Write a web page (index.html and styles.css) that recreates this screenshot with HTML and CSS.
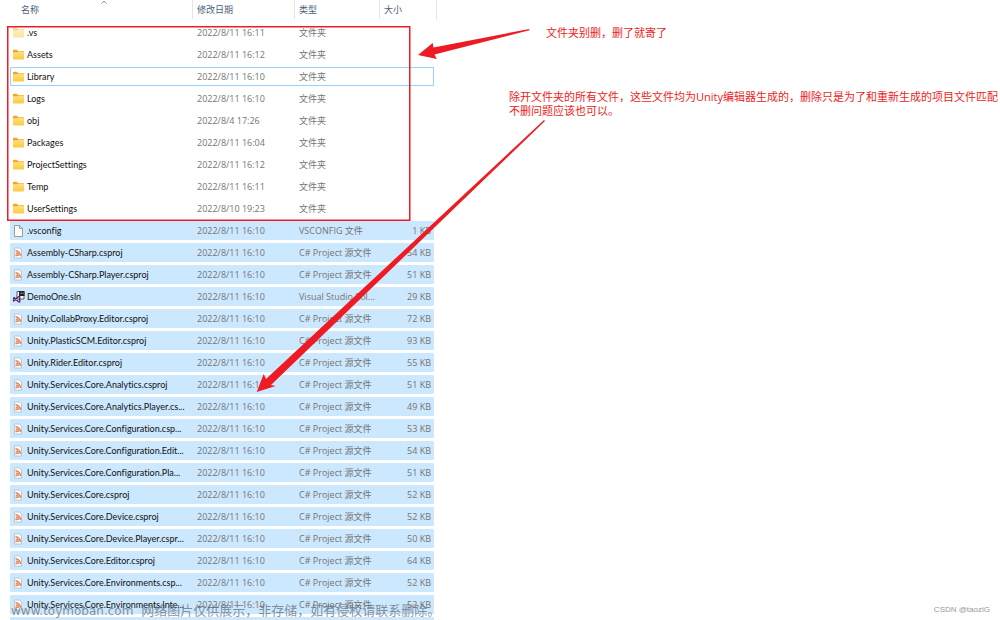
FILE: index.html
```html
<!DOCTYPE html>
<html lang="zh-CN">
<head>
<meta charset="utf-8">
<title>文件列表</title>
<link rel="stylesheet" href="styles.css">
</head>
<body>
<svg class="symbols" aria-hidden="true">
  <defs>
    <linearGradient id="folder-front" x1="0" y1="0" x2="0" y2="1">
      <stop offset="0" stop-color="#ffe08a"/><stop offset="1" stop-color="#fdc83c"/>
    </linearGradient>
  </defs>
  <symbol id="folder" viewBox="0 0 12 12">
    <path d="M0 1.500q0-.8.8-.8h3l1.200 1.200h5.200q.8 0 .8.800v3H0z" fill="#f0a81c"/>
    <path d="M0 3.300h4.500l.9-.8h4.800q.8 0 .8.800v6.500q0 .8-.8.800H.8q-.8 0-.8-.8z" fill="url(#folder-front)"/>
  </symbol>
  <symbol id="blank" viewBox="0 0 12 12">
    <path d="M1.500 .5h5L9.500 3.500v8h-8z" fill="#fff" stroke="#858585" stroke-width=".8"/>
    <path d="M6.500.5v3h3" fill="none" stroke="#858585" stroke-width=".8"/>
  </symbol>
  <symbol id="project" viewBox="0 0 12 12">
    <path d="M1.500 1h5l2 2v8h-7z" fill="#fff" stroke="#a9b3bb" stroke-width=".7"/>
    <path d="M2.700 3.900a5 5 0 0 1 4.800 5M2.700 6.300a2.600 2.600 0 0 1 2.500 2.600" fill="none" stroke="#e08a62" stroke-width="1.600"/>
    <path d="M2.400 7.700h1.500v1.500H2.400z" fill="#d9774a"/>
    <path d="M2.400 3.300L7.600 8.800" stroke="#e39b78" stroke-width=".8"/>
  </symbol>
  <symbol id="solution" viewBox="0 0 12 12">
    <path d="M4 .5h7v7.500H4z" fill="#fff" stroke="#333" stroke-width=".8"/>
    <path d="M6 0h5.500v5H6z" fill="#222"/>
    <path d="M7.500 2.200h1.200M9.500 2.200h1" stroke="#fff" stroke-width=".8"/>
    <path d="M.7 6.200l4.500 4.400 1.500.4V5.200l-1.500.6L.7 10V6.200" fill="none" stroke="#68217a" stroke-width="1.400" stroke-linejoin="round"/>
  </symbol>
</svg>
<main class="page">
  <table class="files">
    <colgroup><col class="col-name"><col class="col-date"><col class="col-type"><col class="col-size"></colgroup>
    <thead>
      <tr><th class="name">名称<svg class="sort" viewBox="0 0 6 4" aria-hidden="true"><path d="M.5 3.500L3 1l2.500 2.500" fill="none" stroke="#777" stroke-width=".8"/></svg></th><th>修改日期</th><th>类型</th><th>大小</th></tr>
    </thead>
    <tbody>
      <tr class="hidden-item"><td><svg class="icon"><use href="#folder"/></svg>.vs</td><td>2022/8/11 16:11</td><td>文件夹</td><td></td></tr>
      <tr><td><svg class="icon"><use href="#folder"/></svg>Assets</td><td>2022/8/11 16:12</td><td>文件夹</td><td></td></tr>
      <tr class="focused"><td><svg class="icon"><use href="#folder"/></svg>Library</td><td>2022/8/11 16:10</td><td>文件夹</td><td></td></tr>
      <tr><td><svg class="icon"><use href="#folder"/></svg>Logs</td><td>2022/8/11 16:10</td><td>文件夹</td><td></td></tr>
      <tr><td><svg class="icon"><use href="#folder"/></svg>obj</td><td>2022/8/4 17:26</td><td>文件夹</td><td></td></tr>
      <tr><td><svg class="icon"><use href="#folder"/></svg>Packages</td><td>2022/8/11 16:04</td><td>文件夹</td><td></td></tr>
      <tr><td><svg class="icon"><use href="#folder"/></svg>ProjectSettings</td><td>2022/8/11 16:12</td><td>文件夹</td><td></td></tr>
      <tr><td><svg class="icon"><use href="#folder"/></svg>Temp</td><td>2022/8/11 16:11</td><td>文件夹</td><td></td></tr>
      <tr><td><svg class="icon"><use href="#folder"/></svg>UserSettings</td><td>2022/8/10 19:23</td><td>文件夹</td><td></td></tr>
      <tr class="selected"><td><svg class="icon"><use href="#blank"/></svg>.vsconfig</td><td>2022/8/11 16:10</td><td>VSCONFIG 文件</td><td>1 KB</td></tr>
      <tr class="selected"><td><svg class="icon"><use href="#project"/></svg>Assembly-CSharp.csproj</td><td>2022/8/11 16:10</td><td>C# Project 源文件</td><td>54 KB</td></tr>
      <tr class="selected"><td><svg class="icon"><use href="#project"/></svg>Assembly-CSharp.Player.csproj</td><td>2022/8/11 16:10</td><td>C# Project 源文件</td><td>51 KB</td></tr>
      <tr class="selected"><td><svg class="icon"><use href="#solution"/></svg>DemoOne.sln</td><td>2022/8/11 16:10</td><td>Visual Studio Sol...</td><td>29 KB</td></tr>
      <tr class="selected"><td><svg class="icon"><use href="#project"/></svg>Unity.CollabProxy.Editor.csproj</td><td>2022/8/11 16:10</td><td>C# Project 源文件</td><td>72 KB</td></tr>
      <tr class="selected"><td><svg class="icon"><use href="#project"/></svg>Unity.PlasticSCM.Editor.csproj</td><td>2022/8/11 16:10</td><td>C# Project 源文件</td><td>93 KB</td></tr>
      <tr class="selected"><td><svg class="icon"><use href="#project"/></svg>Unity.Rider.Editor.csproj</td><td>2022/8/11 16:10</td><td>C# Project 源文件</td><td>55 KB</td></tr>
      <tr class="selected"><td><svg class="icon"><use href="#project"/></svg>Unity.Services.Core.Analytics.csproj</td><td>2022/8/11 16:10</td><td>C# Project 源文件</td><td>51 KB</td></tr>
      <tr class="selected"><td><svg class="icon"><use href="#project"/></svg>Unity.Services.Core.Analytics.Player.cs...</td><td>2022/8/11 16:10</td><td>C# Project 源文件</td><td>49 KB</td></tr>
      <tr class="selected"><td><svg class="icon"><use href="#project"/></svg>Unity.Services.Core.Configuration.csp...</td><td>2022/8/11 16:10</td><td>C# Project 源文件</td><td>53 KB</td></tr>
      <tr class="selected"><td><svg class="icon"><use href="#project"/></svg>Unity.Services.Core.Configuration.Edit...</td><td>2022/8/11 16:10</td><td>C# Project 源文件</td><td>54 KB</td></tr>
      <tr class="selected"><td><svg class="icon"><use href="#project"/></svg>Unity.Services.Core.Configuration.Pla...</td><td>2022/8/11 16:10</td><td>C# Project 源文件</td><td>51 KB</td></tr>
      <tr class="selected"><td><svg class="icon"><use href="#project"/></svg>Unity.Services.Core.csproj</td><td>2022/8/11 16:10</td><td>C# Project 源文件</td><td>52 KB</td></tr>
      <tr class="selected"><td><svg class="icon"><use href="#project"/></svg>Unity.Services.Core.Device.csproj</td><td>2022/8/11 16:10</td><td>C# Project 源文件</td><td>52 KB</td></tr>
      <tr class="selected"><td><svg class="icon"><use href="#project"/></svg>Unity.Services.Core.Device.Player.cspr...</td><td>2022/8/11 16:10</td><td>C# Project 源文件</td><td>50 KB</td></tr>
      <tr class="selected"><td><svg class="icon"><use href="#project"/></svg>Unity.Services.Core.Editor.csproj</td><td>2022/8/11 16:10</td><td>C# Project 源文件</td><td>64 KB</td></tr>
      <tr class="selected"><td><svg class="icon"><use href="#project"/></svg>Unity.Services.Core.Environments.csp...</td><td>2022/8/11 16:10</td><td>C# Project 源文件</td><td>52 KB</td></tr>
      <tr class="selected"><td><svg class="icon"><use href="#project"/></svg>Unity.Services.Core.Environments.Inte...</td><td>2022/8/11 16:10</td><td>C# Project 源文件</td><td>52 KB</td></tr>
      <tr class="selected"><td></td><td></td><td></td><td></td></tr>
    </tbody>
  </table>
  <aside class="notes">
    <p class="note note-folders">文件夹别删，删了就寄了</p>
    <p class="note">除开文件夹的所有文件，这些文件均为Unity编辑器生成的，删除只是为了和重新生成的项目文件匹配<br>不删问题应该也可以。</p>
  </aside>
  <svg class="markup" width="560" height="400" viewBox="0 0 560 400" aria-hidden="true">
    <rect x="7.750" y="26.750" width="402" height="193.500" fill="none" stroke="#ed1c24" stroke-width="1.500"/>
    <path d="M418 55L432.700 43L433.500 47.500L529.300 29L529.300 30.200L434.500 54.500L436.700 59Z" fill="#ed1c24"/>
    <path d="M256.700 392L263.700 374L266 379L544 120L545 121L271 385L275.700 386Z" fill="#ed1c24"/>
  </svg>
  <p class="watermark"><span class="site">www.toymoban.com</span><span>网络图片仅供展示，非存储，如有侵权请联系删除。</span></p>
  <p class="credit">CSDN @taoziG</p>
</main>
</body>
</html>
```

FILE: styles.css
```css
body {
  margin: 0;
  background: #fff;
  font-family: "Open Sans", "Noto Sans CJK SC", sans-serif;
  font-size: 9px;
  line-height: 12px;
}

p {
  margin: 0;
}

.symbols {
  position: absolute;
  width: 0;
  height: 0;
}

.page {
  position: relative;
  display: flex;
  align-items: flex-start;
  height: 100vh;
  overflow: hidden;
}

.files {
  flex: none;
  width: 424px;
  margin: -3px 0 0 10px;
  table-layout: fixed;
  border-collapse: separate;
  border-spacing: 0 3px;
  color: #747474;
}

.col-name { width: 182px; }
.col-date { width: 102px; }
.col-type { width: 85px; }
.col-size { width: 55px; }

.files th {
  box-sizing: border-box;
  height: 20px;
  padding: 0 0 0 5px;
  background: linear-gradient(#e5e5e5, #e5e5e5) left top / 1px 19px no-repeat;
  color: #4c607a;
  font-weight: 400;
  text-align: left;
}

.files th.name {
  position: relative;
  padding-left: 11px;
  background: none;
}

.files th:last-child {
  box-shadow: 2px 0 #fff, 3px 0 #e5e5e5;
}

.sort {
  position: absolute;
  top: 0;
  left: 91px;
  width: 6px;
  height: 4px;
}

.files td {
  box-sizing: border-box;
  height: 19px;
  padding: 0 0 0 5px;
  white-space: nowrap;
}

.files td:first-child {
  padding-left: 3px;
  color: #111;
  font-family: Lato, "Open Sans", sans-serif;
  font-variant-ligatures: none;
  border-radius: 1px 0 0 1px;
}

.files td:last-child {
  padding: 0 3px 0 0;
  text-align: right;
  border-radius: 0 1px 1px 0;
}

.icon {
  width: 12px;
  height: 12px;
  margin-right: 2px;
  vertical-align: top;
}

.hidden-item .icon {
  opacity: 0.5;
}

.selected td {
  background: #cce8ff;
}

.files .focused td {
  border: 0 solid #99d1ff;
  border-width: 1px 0;
}

.files .focused td:first-child {
  padding-left: 2px;
  border-left-width: 1px;
}

.files .focused td:last-child {
  border-right-width: 1px;
}

.notes {
  flex: 1;
  padding: 26px 0 0 75px;
  color: #ed1c24;
  font-size: 11px;
  line-height: 14px;
}

.note {
  white-space: nowrap;
}

.note-folders {
  margin: 0 0 50px 37px;
}

.markup {
  position: absolute;
  top: 0;
  left: 0;
}

.watermark {
  position: absolute;
  left: 11px;
  bottom: 0;
  display: flex;
  align-items: baseline;
  gap: 8px;
  color: rgba(95, 100, 108, 0.7);
  font-size: 13px;
  line-height: 18px;
  white-space: nowrap;
}

.site {
  font-family: "DejaVu Sans", sans-serif;
  font-size: 12px;
}

.credit {
  position: absolute;
  right: 10px;
  bottom: 4px;
  color: #999;
  font-family: "Liberation Sans", sans-serif;
  font-size: 8px;
}
```
